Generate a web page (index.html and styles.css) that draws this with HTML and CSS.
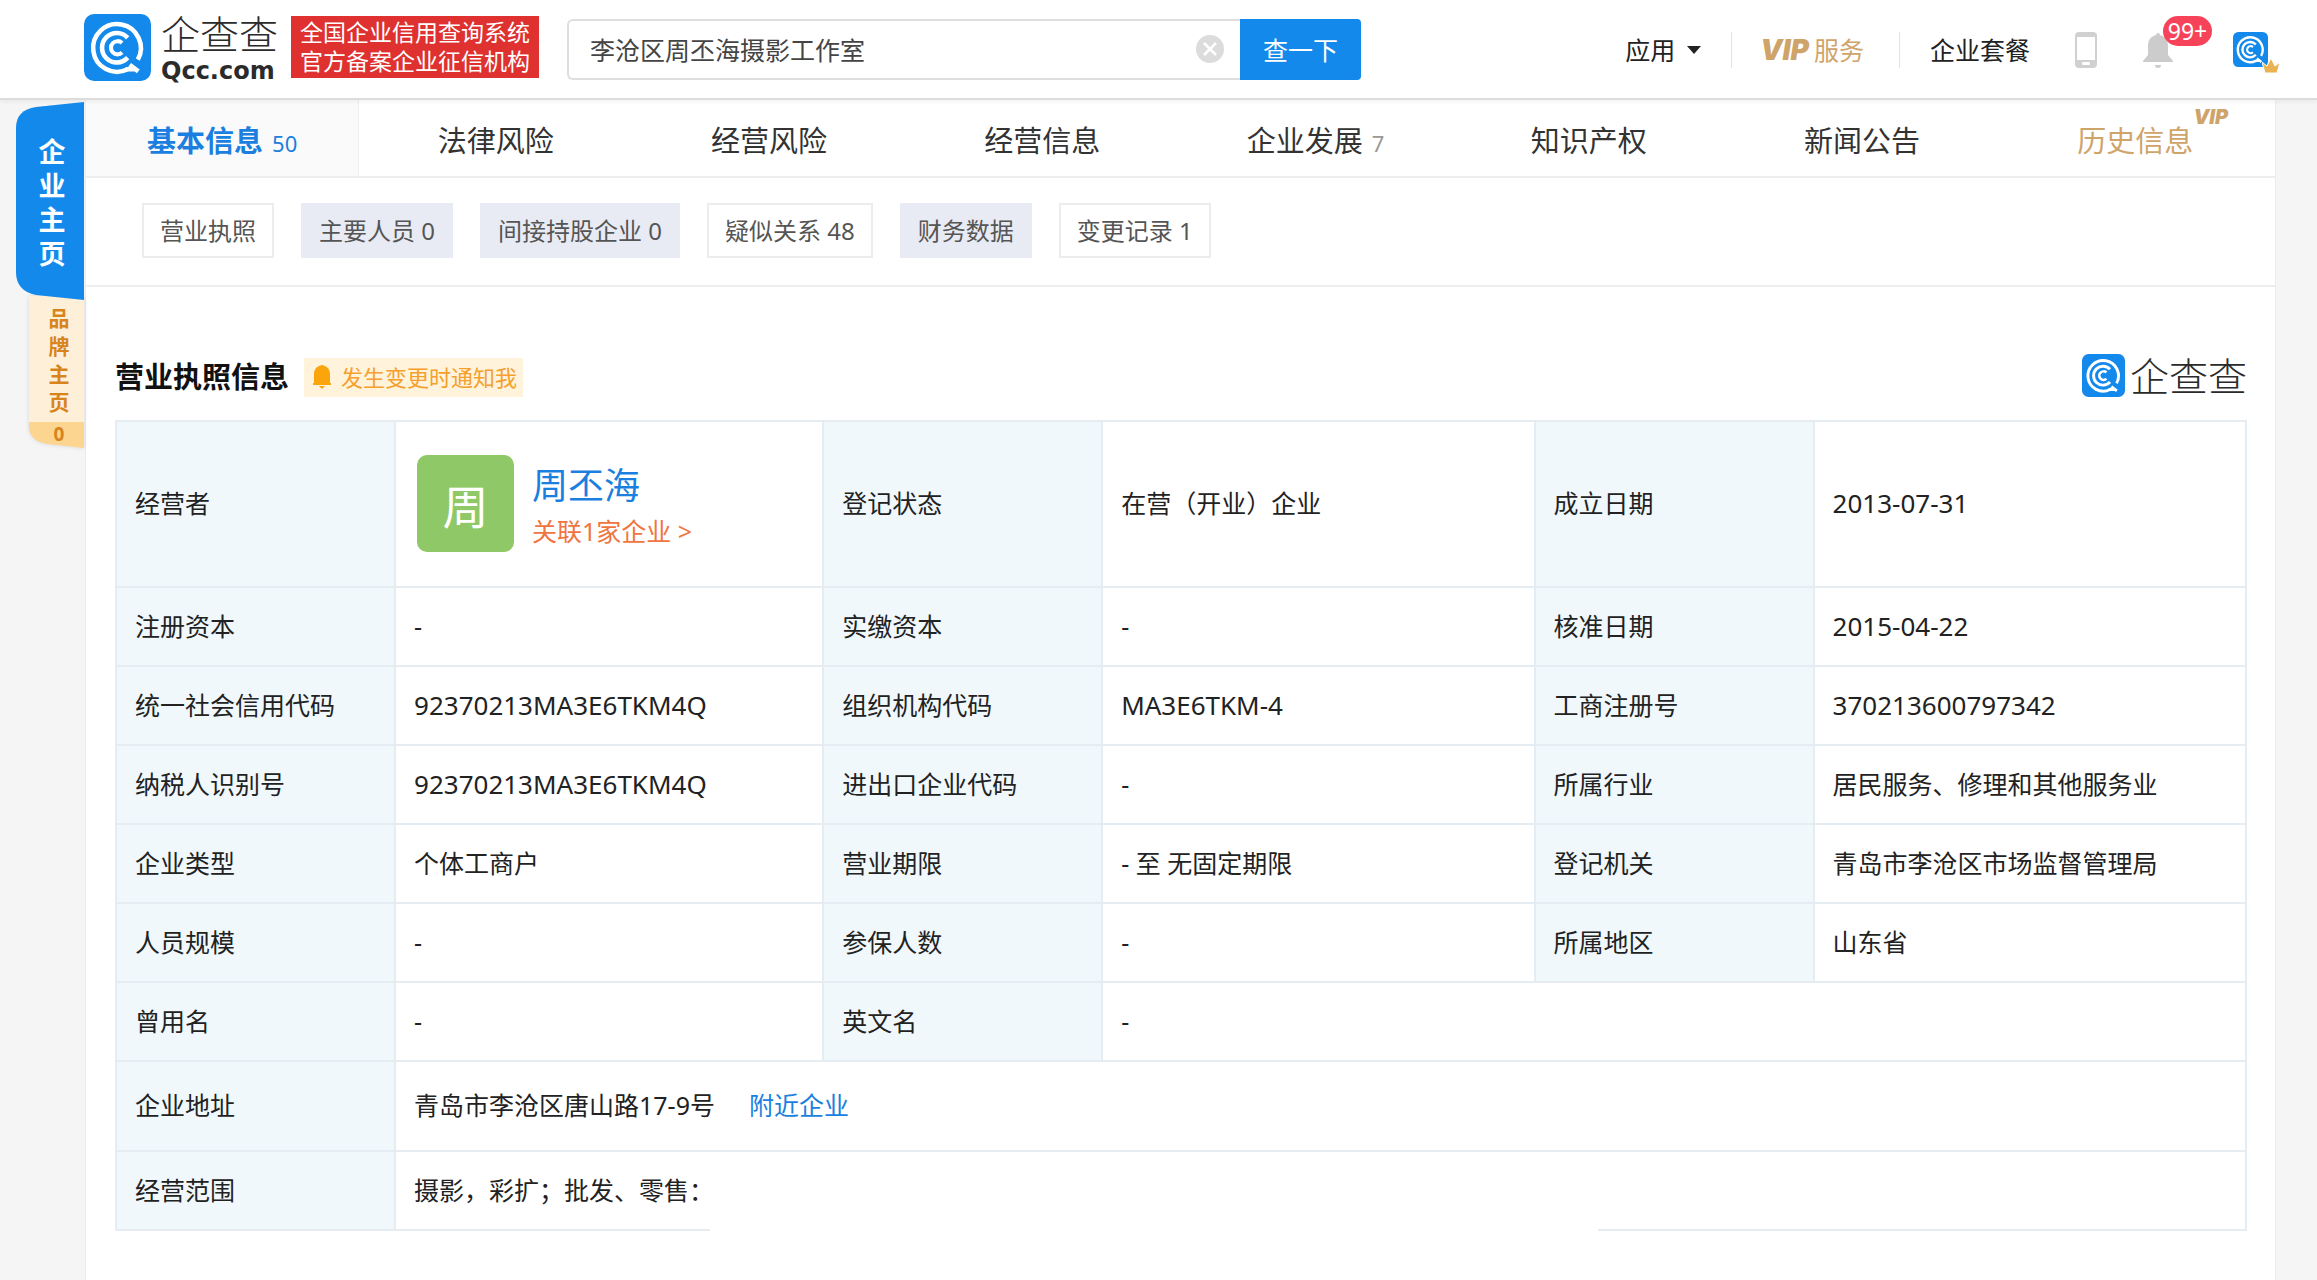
FILE: index.html
```html
<!DOCTYPE html>
<html lang="zh-CN">
<head>
<meta charset="utf-8">
<meta name="viewport" content="width=device-width, initial-scale=1">
<title>企查查</title>
<link rel="stylesheet" href="styles.css">
</head>
<body>
<svg class="defs" aria-hidden="true">
  <symbol id="qcc" viewBox="0 0 66 66">
    <rect width="66" height="66" rx="10" fill="#1489ec"/>
    <g fill="none" stroke="#fff">
      <path d="M43 54.500A23.500 23.500 0 1 1 53 45" stroke-width="4.500"/>
      <path d="M41 54.500H50M45 50L53.500 56.500" stroke-width="4.500"/>
      <path d="M43 23.500A14.500 14.500 0 1 0 43 43" stroke-width="4.500"/>
      <path d="M37.500 28.500A6.500 6.500 0 1 0 37.500 38" stroke-width="4"/>
    </g>
  </symbol>
</svg>

<header class="header">
  <a class="brand" href="#">
    <svg class="brand-icon"><use href="#qcc"/></svg>
    <span class="brand-name"><span class="wordmark">企查查</span><span class="domain">Qcc.com</span></span>
  </a>
  <p class="slogan">全国企业信用查询系统<br>官方备案企业征信机构</p>
  <form class="search">
    <input class="search-input" type="text" aria-label="搜索企业" value="李沧区周丕海摄影工作室">
    <button class="search-clear" type="button" aria-label="清空">
      <svg viewBox="0 0 28 28"><circle cx="14" cy="14" r="14" fill="#dcdcdc"/><path d="M8 8L20 20M20 8L8 20" stroke="#fff" stroke-width="2.500"/></svg>
    </button>
    <button class="search-submit" type="button">查一下</button>
  </form>
  <nav class="tools">
    <a class="tool apps" href="#">应用<svg viewBox="0 0 14 8"><path d="M0 0H14L7 8Z" fill="#222"/></svg></a>
    <a class="tool vip-service" href="#"><b class="vip">VIP</b>服务</a>
    <a class="tool" href="#">企业套餐</a>
    <a class="phone" href="#" aria-label="手机版">
      <svg viewBox="0 0 22 36"><rect width="22" height="36" rx="4" fill="#d0d0d0"/><rect x="2" y="5" width="18" height="23" fill="#fff"/><rect x="7" y="30" width="8" height="3" rx="1" fill="#fff"/></svg>
    </a>
    <a class="bell" href="#" aria-label="消息">
      <svg viewBox="0 0 30 36"><path d="M13 3a2 2 0 0 1 4 0C23 4.500 25 9 25 14V23L30 29V30H0V29L5 23V14C5 9 7 4.500 13 3Z" fill="#ccc"/><path d="M12 33H18A3 3 0 0 1 12 33Z" fill="#ccc"/></svg>
      <span class="badge">99+</span>
    </a>
    <a class="account" href="#" aria-label="账号">
      <svg class="account-icon"><use href="#qcc"/></svg>
      <svg class="crown" viewBox="0 0 18 16"><path d="M0 4L5 8L9 0L13 8L18 4L15 15H3Z" fill="#eab252" stroke="#fff"/></svg>
    </a>
  </nav>
</header>

<div class="page">
  <aside class="side">
    <a class="side-company" href="#">
      <svg viewBox="0 0 68 198" preserveAspectRatio="none"><path d="M68 0V198L20 193Q0 189 0 170V26Q0 8 20 5Z" fill="#1489ec"/></svg>
      <span>企</span><span>业</span><span>主</span><span>页</span>
    </a>
    <a class="side-brand" href="#">
      <svg viewBox="0 0 55 152" preserveAspectRatio="none"><path d="M0 0H55V126H0Z" fill="#fef0d8"/><path d="M0 126H55V152L18 148Q0 145 0 130Z" fill="#fcd590"/></svg>
      <span>品</span><span>牌</span><span>主</span><span>页</span><em>0</em>
    </a>
  </aside>

  <main class="content">
    <nav class="tabs">
      <a class="tab active" href="#">基本信息<small>50</small></a>
      <a class="tab" href="#">法律风险</a>
      <a class="tab" href="#">经营风险</a>
      <a class="tab" href="#">经营信息</a>
      <a class="tab" href="#">企业发展<small>7</small></a>
      <a class="tab" href="#">知识产权</a>
      <a class="tab" href="#">新闻公告</a>
      <a class="tab history" href="#"><span class="history-label">历史信息<b class="vip vip-mark">VIP</b></span></a>
    </nav>

    <nav class="chips">
      <a class="chip" href="#">营业执照</a>
      <a class="chip muted" href="#">主要人员 0</a>
      <a class="chip muted" href="#">间接持股企业 0</a>
      <a class="chip" href="#">疑似关系 48</a>
      <a class="chip muted" href="#">财务数据</a>
      <a class="chip" href="#">变更记录 1</a>
    </nav>

    <section class="license">
      <div class="section-head">
        <h2>营业执照信息</h2>
        <button class="notify" type="button">
          <svg viewBox="0 0 18 24"><path d="M9 0C14 1 17 4 17 9V18H18V20H0V18H1V9C1 4 4 1 9 0ZM6 21H12L9 24Z" fill="#fba50d"/></svg>发生变更时通知我
        </button>
        <span class="watermark"><svg class="watermark-icon"><use href="#qcc"/></svg><span class="wordmark">企查查</span></span>
      </div>

      <table class="info">
        <colgroup><col class="c-label"><col class="c-value"><col class="c-label"><col><col class="c-label"><col></colgroup>
        <tr class="row-owner">
          <th scope="row">经营者</th>
          <td>
            <div class="owner">
              <span class="avatar">周</span>
              <div class="owner-text"><a class="owner-name" href="#">周丕海</a><a class="owner-link" href="#">关联1家企业 &gt;</a></div>
            </div>
          </td>
          <th scope="row">登记状态</th><td>在营（开业）企业</td>
          <th scope="row">成立日期</th><td class="num">2013-07-31</td>
        </tr>
        <tr><th scope="row">注册资本</th><td>-</td><th scope="row">实缴资本</th><td>-</td><th scope="row">核准日期</th><td class="num">2015-04-22</td></tr>
        <tr><th scope="row">统一社会信用代码</th><td class="num">92370213MA3E6TKM4Q</td><th scope="row">组织机构代码</th><td class="num">MA3E6TKM-4</td><th scope="row">工商注册号</th><td class="num">370213600797342</td></tr>
        <tr><th scope="row">纳税人识别号</th><td class="num">92370213MA3E6TKM4Q</td><th scope="row">进出口企业代码</th><td>-</td><th scope="row">所属行业</th><td>居民服务、修理和其他服务业</td></tr>
        <tr><th scope="row">企业类型</th><td>个体工商户</td><th scope="row">营业期限</th><td>- 至 无固定期限</td><th scope="row">登记机关</th><td>青岛市李沧区市场监督管理局</td></tr>
        <tr><th scope="row">人员规模</th><td>-</td><th scope="row">参保人数</th><td>-</td><th scope="row">所属地区</th><td>山东省</td></tr>
        <tr><th scope="row">曾用名</th><td>-</td><th scope="row">英文名</th><td colspan="3">-</td></tr>
        <tr class="row-address"><th scope="row">企业地址</th><td colspan="5">青岛市李沧区唐山路17-9号<a class="nearby" href="#">附近企业</a></td></tr>
        <tr><th scope="row">经营范围</th><td class="scope" colspan="5">摄影，彩扩；批发、零售：</td></tr>
      </table>
    </section>
  </main>
</div>
</body>
</html>
```
FILE: styles.css
```css
* { box-sizing: border-box; }

body {
  margin: 0;
  background: #f5f5f5;
  color: #222;
  font-family: "Noto Sans", "Noto Sans CJK SC", sans-serif;
  font-size: 25px;
  line-height: 36px;
}

a { color: inherit; text-decoration: none; }
button, input { font: inherit; }
svg { display: block; }
.defs { position: absolute; width: 0; height: 0; }

/* Header */
.header {
  position: relative;
  display: flex;
  align-items: center;
  height: 100px;
  padding: 0 49px 4px 84px;
  background: #fff;
  border-bottom: 2px solid #dcdcdc;
  box-shadow: 0 2px 4px rgba(0, 0, 0, 0.05);
}
.brand { display: flex; align-items: center; gap: 10px; }
.brand-icon { width: 67px; height: 67px; }
.brand-name { display: flex; flex-direction: column; gap: 2px; width: 118px; padding-top: 8px; }
.wordmark {
  font-family: "Noto Sans CJK SC", sans-serif;
  font-size: 39px;
  font-weight: 300;
  line-height: 38px;
  color: #2b2b2b;
}
.domain {
  font-family: "DejaVu Sans", sans-serif;
  font-size: 24px;
  font-weight: 700;
  line-height: 36px;
  color: #2b2b2b;
}
.slogan {
  margin: 0 28px 0 12px;
  padding: 2px 9px;
  background: #de3130;
  color: #fff;
  font-size: 23px;
  line-height: 29px;
  white-space: nowrap;
}
.search { position: relative; display: flex; flex: 0 1 794px; height: 61px; margin-top: 5px; }
.search-input {
  flex: 1;
  min-width: 0;
  padding: 0 60px 0 21px;
  border: 2px solid #dedede;
  border-right: 0;
  border-radius: 6px 0 0 6px;
  background: #fff;
  color: #444;
}
.search-clear {
  position: absolute;
  right: 137px;
  top: 16px;
  width: 28px;
  height: 28px;
  padding: 0;
  border: 0;
  background: none;
}
.search-submit {
  width: 121px;
  padding: 0;
  border: 0;
  border-radius: 0 4px 4px 0;
  background: #1489ec;
  color: #fff;
}
.tools { display: flex; align-items: center; margin-left: auto; margin-top: 5px; white-space: nowrap; }
.tool { display: flex; align-items: center; }
.apps { gap: 12px; }
.apps svg { width: 14px; height: 8px; }
.vip { font-family: Inter, sans-serif; font-weight: 900; font-style: italic; }
.vip-service {
  gap: 5px;
  margin: 0 30px;
  padding: 0 35px 0 28px;
  border-left: 1px solid #e4e4e4;
  border-right: 1px solid #e4e4e4;
  color: #cfa46a;
  font-size: 25px;
}
.vip-service .vip { font-size: 28px; }
.phone { margin-left: 45px; }
.phone svg { width: 22px; height: 36px; }
.bell { position: relative; margin: 0 60px 0 46px; }
.bell svg { width: 30px; height: 36px; }
.badge {
  position: absolute;
  left: 20px;
  top: -16px;
  width: 49px;
  height: 30px;
  border-radius: 15px;
  background: #f74359;
  color: #fff;
  font-size: 23px;
  line-height: 30px;
  text-align: center;
}
.account { position: relative; }
.account-icon { width: 35px; height: 35px; }
.crown { position: absolute; left: 29px; top: 26px; width: 18px; height: 16px; }

/* Page frame */
.page {
  display: grid;
  grid-template-columns: 85px minmax(0, 1fr) 41px;
  min-height: calc(100vh - 100px);
}
.side { display: flex; flex-direction: column; align-items: flex-end; padding: 2px 1px 0 0; }
.side a { position: relative; display: flex; flex-direction: column; align-items: center; font-weight: 700; }
.side svg { position: absolute; inset: 0; width: 100%; height: 100%; }
.side span, .side em { position: relative; }
.side-company { z-index: 1; width: 68px; height: 198px; padding: 33px 0 0 4px; color: #fff; font-size: 27px; line-height: 34px; }
.side-brand { width: 55px; height: 152px; margin-top: -4px; padding: 8px 0 0 5px; color: #d8841c; font-size: 21px; line-height: 28px; }
.side-brand em { margin-top: 6px; font-size: 19px; font-style: normal; line-height: 24px; }
.side-brand svg { filter: drop-shadow(0 0 2px rgba(0, 0, 0, 0.12)); }

.content { background: #fff; border: solid #ececec; border-width: 0 1px; }

.tabs { display: grid; grid-template-columns: repeat(8, 1fr); height: 78px; padding-right: 3px; border-bottom: 2px solid #eee; }
.tab { display: flex; align-items: center; justify-content: center; gap: 9px; padding-top: 6px; font-size: 29px; color: #333; white-space: nowrap; }
.tab small { font-size: 22px; font-weight: 400; color: #999; padding-top: 3px; }
.tab.active { background: #fafafa; border-right: 1px solid #eee; color: #1b7fe0; font-weight: 700; }
.tab.active small { color: #1b7fe0; }
.tab.history { color: #cfa46a; }
.history-label { position: relative; }
.vip-mark { position: absolute; left: 100%; top: -18px; font-size: 20px; line-height: 24px; }

.chips { display: flex; flex-wrap: wrap; gap: 27px; padding: 25px 56px 27px; border-bottom: 2px solid #eee; }
.chip { padding: 8px 16px 7px; border: 2px solid #ececec; font-size: 24px; color: #555; white-space: nowrap; }
.chip.muted { background: #e9ebf4; border-color: #e9ebf4; }

/* Licence section */
.license { padding: 67px 28px 49px 29px; }
.section-head { display: flex; align-items: center; height: 46px; margin-bottom: 20px; }
h2 { margin: 0; font-size: 29px; line-height: 40px; color: #111; }
.notify {
  display: flex;
  align-items: center;
  gap: 10px;
  height: 39px;
  margin-left: 15px;
  padding: 0 6px 0 9px;
  border: 0;
  background: #fff3dc;
  color: #f5a02d;
  font-size: 22px;
}
.notify svg { width: 18px; height: 24px; }
.watermark { display: flex; align-items: center; gap: 5px; margin-left: auto; padding-bottom: 3px; }
.watermark .wordmark { padding-bottom: 4px; }
.watermark-icon { width: 43px; height: 43px; }

.info { width: 100%; table-layout: fixed; border-collapse: collapse; }
.c-label { width: 13.1%; }
.c-value { width: 20.1%; }
.info th, .info td { height: 79px; padding: 0 18px 2px; border: 2px solid #e5edf2; font-weight: 400; text-align: left; }
.info th { background: #f0f8fc; }
.info .num { font-size: 26px; }
.info .row-owner > * { height: 166px; }
.info .row-address > * { height: 90px; }
.owner { display: flex; align-items: center; gap: 18px; padding-left: 3px; }
.avatar {
  width: 97px;
  height: 97px;
  padding-top: 5px;
  border-radius: 10px;
  background: #8fc866;
  color: #fff;
  font-size: 46px;
  line-height: 92px;
  text-align: center;
}
.owner-text { display: flex; flex-direction: column; padding-top: 4px; }
.owner-name { color: #1b7fe0; font-size: 36px; line-height: 52px; }
.owner-link { color: #f07541; line-height: 38px; }
.nearby { margin-left: 34px; color: #1b7fe0; }

/* The scope text fades out: a white patch hides the rest of it and the rule below */
.scope { position: relative; }
.scope::after { content: ""; position: absolute; left: 17%; right: 35%; top: 20px; bottom: -10px; background: #fff; }
```
